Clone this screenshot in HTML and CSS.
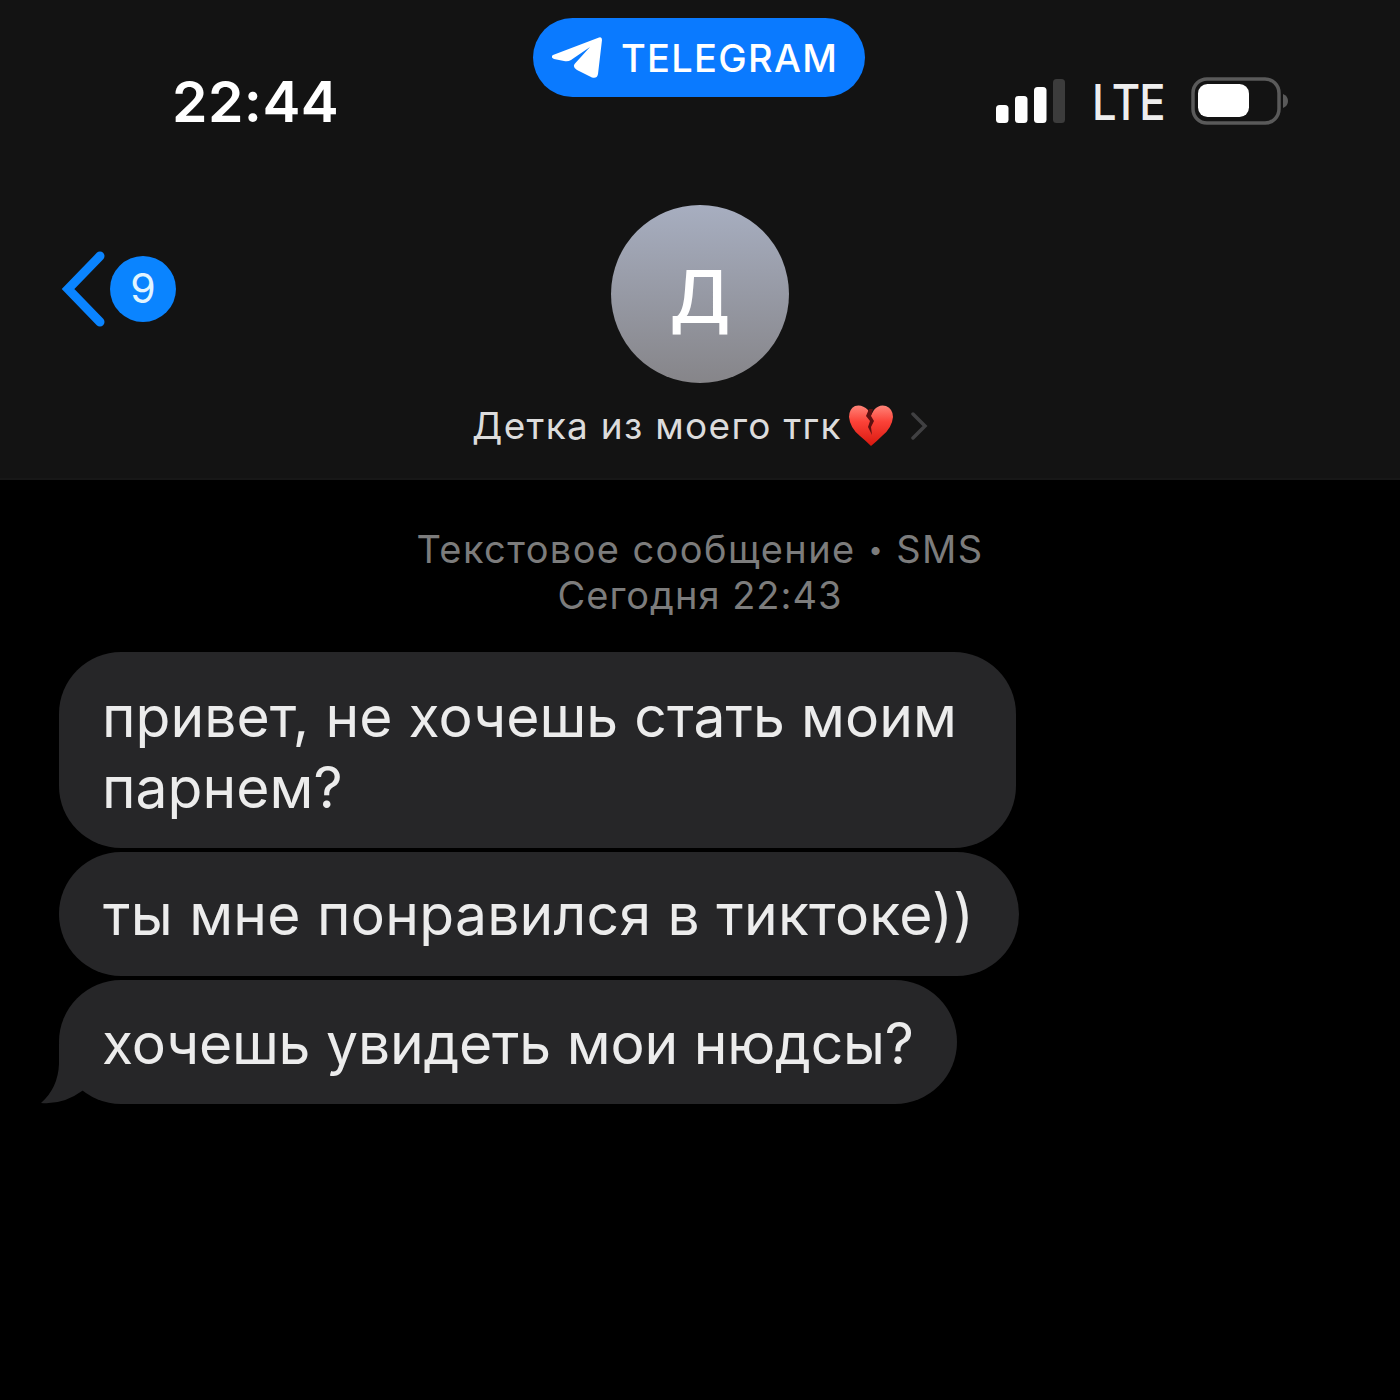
FILE: index.html
```html
<!DOCTYPE html>
<html lang="ru">
<head>
<meta charset="utf-8">
<title>Сообщения</title>
<link rel="stylesheet" href="styles.css">
</head>
<body>
<div class="screen">
  <header class="header">
    <div class="status">
      <div class="time"><span>22:44</span></div>
      <div class="pill">
        <svg class="plane" viewBox="0 0 52 44" width="52" height="44"><path d="M1 19 L47 1.500 Q50 0.500 50 4 L46 38 Q45 43 40 41.500 L25 34 Q20 31 23 27.500 L38 11 L19 24 Q16 26 12 25 L2 23 Q-2 21 1 19Z" fill="#fff"/></svg>
        <span class="pill-text">TELEGRAM</span>
      </div>
      <div class="indicators">
        <svg class="signal" viewBox="0 0 72 46" width="72" height="46">
          <rect x="1" y="27" width="12.500" height="18" rx="3.500" fill="#fff"/>
          <rect x="20" y="18" width="12.500" height="27" rx="3.500" fill="#fff"/>
          <rect x="39" y="9" width="12.500" height="36" rx="3.500" fill="#fff"/>
          <rect x="58" y="1" width="12" height="44" rx="3.500" fill="#3c3c3c"/>
        </svg>
        <span class="lte">LTE</span>
        <svg class="battery" viewBox="0 0 98 48" width="98" height="48">
          <rect x="2" y="2" width="86" height="44" rx="14" fill="none" stroke="#5a5a5a" stroke-width="3.500"/>
          <rect x="7" y="7" width="51" height="33" rx="9.500" fill="#fff"/>
          <path d="M92 17 Q97 19 97 24 Q97 29 92 31Z" fill="#5a5a5a"/>
        </svg>
      </div>
    </div>
    <div class="contact">
      <div class="back">
        <svg viewBox="0 0 46 78" width="46" height="78"><path d="M40 6 L8 39 L40 72" fill="none" stroke="#0a84ff" stroke-width="9" stroke-linecap="round" stroke-linejoin="miter"/></svg>
        <span class="count">9</span>
      </div>
      <div class="person">
        <div class="avatar">Д</div>
        <div class="name">
          <span class="name-text">Детка из моего тгк</span>
          <svg class="heart" viewBox="0 0 46 44" width="46" height="44">
            <defs><linearGradient id="red" x2="0" y2="1"><stop offset="0" stop-color="#ff8478"/><stop offset=".4" stop-color="#fb4238"/><stop offset="1" stop-color="#d9180f"/></linearGradient></defs>
            <path d="M20 6 Q14 0 7 2 Q1 5 1 13 Q2 24 12 32 Q18 37 23 42 Q29 37 34 32 Q44 24 45 13 Q45 5 38 2 Q31 0 26 6 L22 13 Z" fill="url(#red)"/>
            <path d="M21 5 L25 5 L23 12 L26 17 L23 23 L24 31 L20 23 L22 17 L18 12 Z" fill="#5c1010"/>
          </svg>
          <svg class="more" viewBox="0 0 17 30" width="17" height="30"><path d="M2 3 L14 15 L2 27" fill="none" stroke="#404042" stroke-width="3.500" stroke-linecap="round"/></svg>
        </div>
      </div>
    </div>
  </header>
  <main class="thread">
    <div class="stamp">
      <div class="stamp-kind">Текстовое сообщение <span class="dot">•</span> SMS</div>
      <div class="stamp-date">Сегодня 22:43</div>
    </div>
    <div class="bubbles">
      <div class="bubble first"><span>привет, не хочешь стать моим<br>парнем?</span></div>
      <div class="bubble second"><span>ты мне понравился в тиктоке))</span></div>
      <div class="bubble last">
        <svg class="tail" viewBox="0 0 60 60" width="60" height="60"><path d="M18 0 V20 Q17 44 0 59 Q22 61 41 47 L60 30 V0Z" fill="#262628"/></svg>
        <span class="last-text">хочешь увидеть мои нюдсы?</span>
      </div>
    </div>
  </main>
</div>
</body>
</html>
```
FILE: styles.css
```css
* { box-sizing: border-box; }
body { margin: 0; background: #000; font-family: Inter, "Liberation Sans", sans-serif; }
svg { display: block; flex: none; }
span { white-space: nowrap; }
.screen { width: 1400px; height: 1400px; overflow: hidden; background: #000; }
.header { height: 480px; background: #131313; border-bottom: 2px solid #171717; }
.status { display: grid; grid-template-columns: 533px 332px 535px; height: 205px; }
.time { padding: 67px 0 0 172px; font-size: 57px; font-weight: 600; line-height: 70px; letter-spacing: 0.4px; color: #fff; }
.pill { display: flex; align-items: center; height: 79px; margin-top: 18px; padding-left: 19px; gap: 17px; border-radius: 40px; background: #0a7aff; color: #fff; }
.pill-text { font-size: 38px; font-weight: 500; line-height: 46px; letter-spacing: 1.3px; }
.indicators { display: flex; align-items: flex-start; padding-left: 130px; color: #eee; }
.signal { margin-top: 78px; }
.lte { width: 99px; margin: 73px 0 0 25px; font-size: 49px; font-weight: 500; line-height: 60px; letter-spacing: -1px; transform: scaleX(0.89); transform-origin: left; }
.battery { margin-top: 77px; }
.contact { display: grid; grid-template-columns: 400px 600px 400px; }
.back { display: flex; align-items: center; height: 78px; margin-top: 45px; padding-left: 60px; gap: 4px; }
.count { width: 66px; height: 66px; border-radius: 50%; background: #0a84ff; color: #e2f5ff; font-size: 41px; line-height: 65px; text-align: center; }
.person { display: flex; flex-direction: column; align-items: center; }
.avatar { width: 178px; height: 178px; padding-top: 3px; border-radius: 50%; background: linear-gradient(#a7aec0, #868589); color: #fff; font-size: 73px; font-weight: 500; line-height: 178px; text-align: center; }
.name { display: flex; align-items: center; height: 50px; margin-top: 18px; color: #dcdcdc; }
.name-text { font-size: 37px; line-height: 50px; letter-spacing: 1.3px; }
.heart { margin-left: 6px; }
.more { margin-left: 17px; }
.stamp { padding-top: 46px; color: #7c7c7c; font-size: 38px; line-height: 46px; text-align: center; }
.stamp-kind { letter-spacing: 1.4px; }
.stamp-date { letter-spacing: 1px; }
.dot { margin: 0 0 0 0.5px; font-size: 26px; line-height: 0; vertical-align: 4px; }
.bubbles { display: flex; flex-direction: column; align-items: flex-start; gap: 4px; padding: 34px 0 0 59px; }
.bubble { position: relative; padding: 0 43px; border-radius: 62px; background: #262628; color: #ececec; font-size: 57px; line-height: 71px; }
.first { width: 957px; height: 196px; padding-top: 29px; letter-spacing: 0.05px; }
.second { width: 960px; height: 124px; padding-top: 27px; padding-left: 44px; letter-spacing: 0.25px; }
.last { width: 898px; height: 124px; padding-top: 28px; letter-spacing: -0.2px; }
.tail { position: absolute; left: -18px; bottom: 0; }
.last-text { position: relative; }
```
